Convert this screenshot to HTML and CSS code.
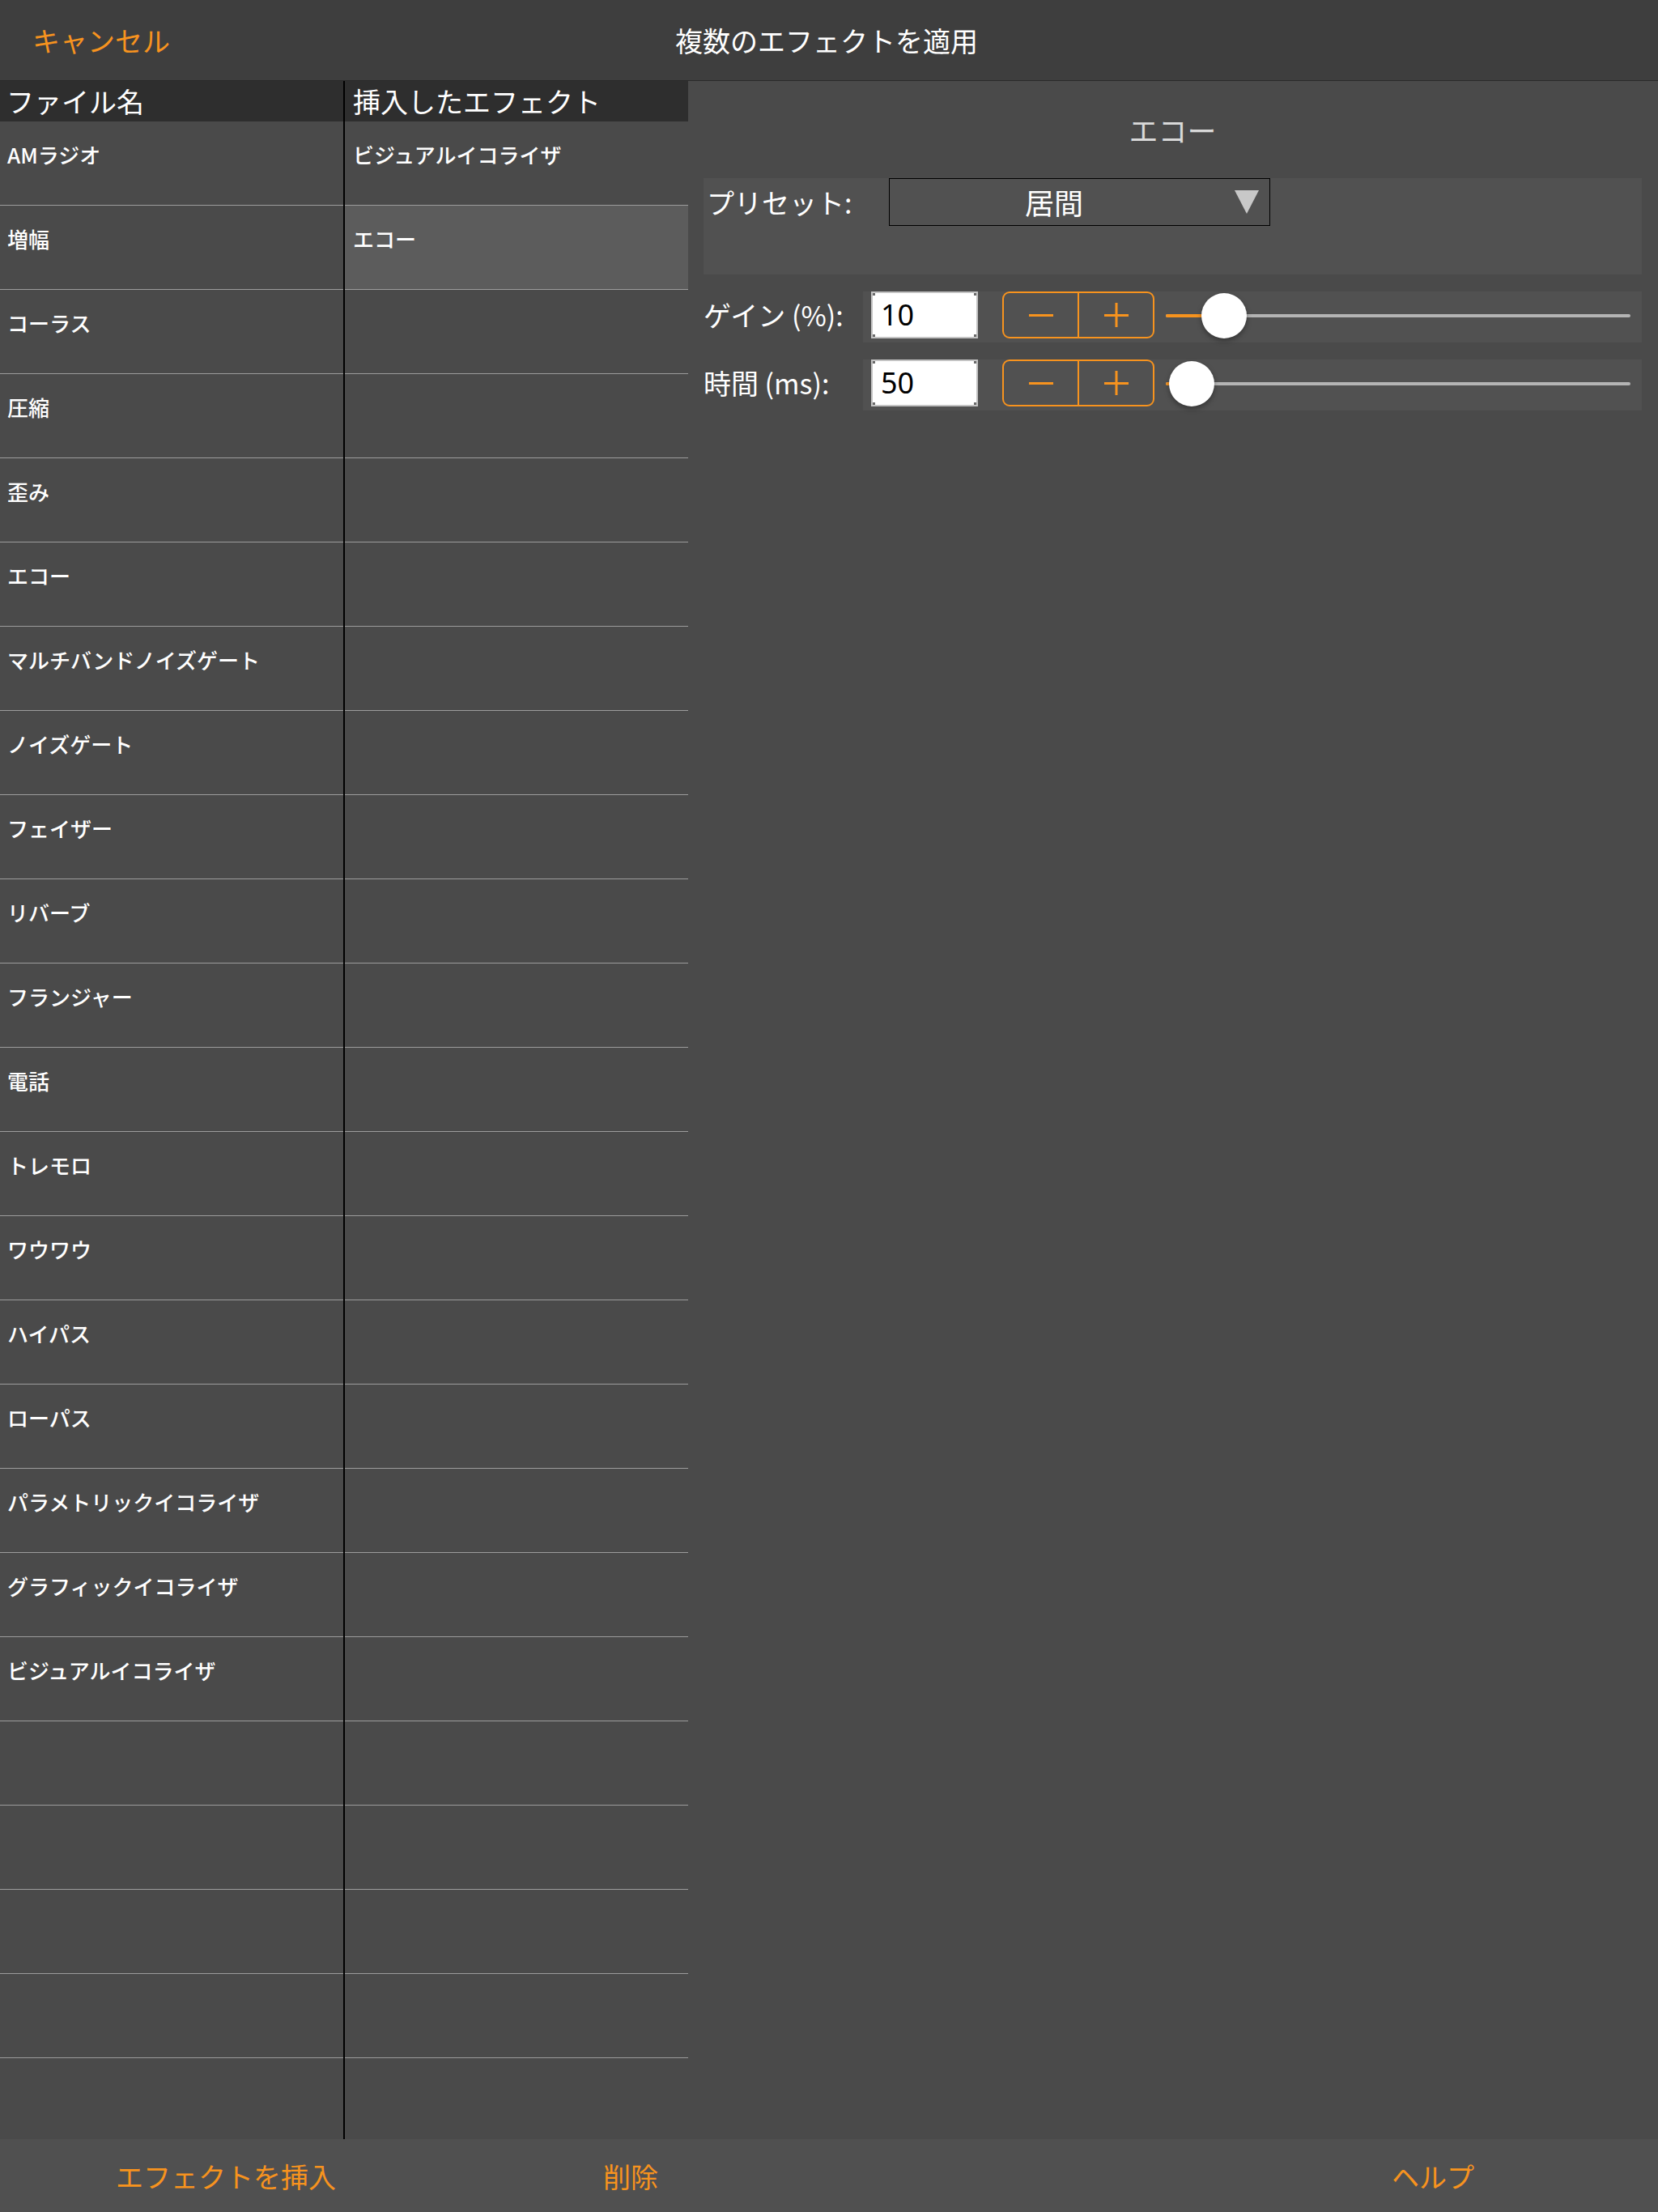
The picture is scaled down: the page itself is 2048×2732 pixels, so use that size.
FILE: index.html
```html
<!DOCTYPE html>
<html lang="ja">
<head>
<meta charset="utf-8">
<title>複数のエフェクトを適用</title>
<link rel="stylesheet" href="styles.css">
</head>
<body>
<div class="app">
  <header class="navbar">
    <span class="nav-left">キャンセル</span>
    <h1 class="nav-title">複数のエフェクトを適用</h1>
    <span class="nav-right"></span>
  </header>

  <div class="main">
    <section class="col col-files">
      <div class="col-head">ファイル名</div>
      <ul class="rows">
        <li>AMラジオ</li>
        <li>増幅</li>
        <li>コーラス</li>
        <li>圧縮</li>
        <li>歪み</li>
        <li>エコー</li>
        <li>マルチバンドノイズゲート</li>
        <li>ノイズゲート</li>
        <li>フェイザー</li>
        <li>リバーブ</li>
        <li>フランジャー</li>
        <li>電話</li>
        <li>トレモロ</li>
        <li>ワウワウ</li>
        <li>ハイパス</li>
        <li>ローパス</li>
        <li>パラメトリックイコライザ</li>
        <li>グラフィックイコライザ</li>
        <li>ビジュアルイコライザ</li>
        <li></li><li></li><li></li><li></li><li></li>
      </ul>
    </section>

    <section class="col col-inserted">
      <div class="col-head">挿入したエフェクト</div>
      <ul class="rows">
        <li>ビジュアルイコライザ</li>
        <li class="selected">エコー</li>
        <li></li><li></li><li></li><li></li><li></li><li></li><li></li><li></li>
        <li></li><li></li><li></li><li></li><li></li><li></li><li></li><li></li>
        <li></li><li></li><li></li><li></li><li></li><li></li>
      </ul>
    </section>

    <section class="panel">
      <h2 class="panel-title">エコー</h2>

      <div class="preset">
        <span class="preset-label">プリセット:</span>
        <div class="dropdown">
          <span class="dd-value">居間</span>
          <span class="dd-arrow"></span>
        </div>
      </div>

      <div class="param">
        <span class="param-label">ゲイン (%):</span>
        <div class="param-box">
          <div class="num">10</div>
          <div class="stepper">
            <span class="step step-minus">
              <svg width="32" height="32" viewBox="0 0 32 32"><path d="M1 16.5H31" stroke="#f7931e" stroke-width="3"/></svg>
            </span>
            <span class="step step-plus">
              <svg width="32" height="32" viewBox="0 0 32 32"><path d="M1 16.5H31M16 1V31" stroke="#f7931e" stroke-width="3"/></svg>
            </span>
          </div>
          <div class="slider">
            <div class="track"><div class="fill" style="width:50px"></div></div>
            <div class="knob" style="left:44px"></div>
          </div>
        </div>
      </div>

      <div class="param">
        <span class="param-label">時間 (ms):</span>
        <div class="param-box">
          <div class="num">50</div>
          <div class="stepper">
            <span class="step step-minus">
              <svg width="32" height="32" viewBox="0 0 32 32"><path d="M1 16.5H31" stroke="#f7931e" stroke-width="3"/></svg>
            </span>
            <span class="step step-plus">
              <svg width="32" height="32" viewBox="0 0 32 32"><path d="M1 16.5H31M16 1V31" stroke="#f7931e" stroke-width="3"/></svg>
            </span>
          </div>
          <div class="slider">
            <div class="track"><div class="fill" style="width:8px"></div></div>
            <div class="knob" style="left:4px"></div>
          </div>
        </div>
      </div>
    </section>
  </div>

  <footer class="toolbar">
    <span class="tb-insert">エフェクトを挿入</span>
    <span class="tb-delete">削除</span>
    <span class="tb-help">ヘルプ</span>
  </footer>
</div>
</body>
</html>
```

FILE: styles.css
```css
* { box-sizing: border-box; }

html, body {
  margin: 0;
  padding: 0;
  background: #4a4a4a;
}

body {
  font-family: "Noto Sans CJK JP", "Noto Sans", sans-serif;
  color: #ffffff;
  width: 2048px;
  height: 2732px;
  overflow: hidden;
}

.app {
  display: flex;
  flex-direction: column;
  height: 2732px;
}

/* ---------- navbar ---------- */
.navbar {
  height: 100px;
  flex: 0 0 100px;
  background: #3e3e3e;
  border-bottom: 1px solid #2a2a2a;
  display: grid;
  grid-template-columns: 1fr auto 1fr;
  align-items: center;
}

.nav-left {
  padding-left: 40px;
  font-size: 34px;
  color: #f7931e;
  line-height: 1;
}

.nav-title {
  margin: 0;
  font-size: 34px;
  font-weight: 400;
  line-height: 1;
  color: #ffffff;
  padding-right: 6px;
}

/* ---------- main ---------- */
.main {
  flex: 1;
  min-height: 0;
  display: flex;
  background: #4a4a4a;
}

.col {
  width: 424px;
  display: flex;
  flex-direction: column;
  overflow: hidden;
}

.col-files {
  width: 426px;
  border-right: 2px solid #000000;
}

.col-head {
  height: 50px;
  flex: 0 0 50px;
  background: #2e2e2e;
  font-size: 34px;
  line-height: 50px;
  padding-left: 8px;
  white-space: nowrap;
}

.col-inserted .col-head {
  padding-left: 10px;
}

.rows {
  list-style: none;
  margin: 0;
  padding: 0;
  flex: 1;
  overflow: hidden;
}

.rows li {
  height: 104px;
  border-bottom: 1px solid #9c9c9c;
  padding: 22px 0 0 9px;
  font-size: 26px;
  line-height: 38px;
  font-weight: 500;
  white-space: nowrap;
}

.col-inserted .rows li {
  padding-left: 10px;
}

.rows li.selected {
  background: #5c5c5c;
}

/* ---------- right panel ---------- */
.panel {
  flex: 1;
  padding: 0 20px 0 19px;
}

.panel-title {
  margin: 35px 0 0 0;
  font-size: 36px;
  font-weight: 400;
  line-height: 50px;
  text-align: center;
  color: #d9d9d9;
}

.preset {
  margin-top: 35px;
  height: 119px;
  background: #515151;
  display: flex;
  align-items: flex-start;
  padding-left: 4px;
}

.preset-label {
  width: 225px;
  font-size: 34px;
  line-height: 59px;
}

.dropdown {
  width: 471px;
  height: 59px;
  border: 1px solid #000000;
  display: flex;
  align-items: center;
  padding-right: 13px;
}

.dd-value {
  flex: 1;
  text-align: center;
  font-size: 36px;
  line-height: 1;
  margin-right: 20px;
  margin-top: -2px;
}

.dd-arrow {
  width: 0;
  height: 0;
  border-left: 15px solid transparent;
  border-right: 15px solid transparent;
  border-top: 29px solid #c8c8c8;
}

.param {
  margin-top: 21px;
  display: flex;
  align-items: flex-start;
}

.param-label {
  width: 197px;
  font-size: 34px;
  line-height: 58px;
  white-space: nowrap;
}

.param-box {
  flex: 1;
  height: 63px;
  background: #515151;
  display: flex;
  align-items: flex-start;
  padding: 0 14px 0 10px;
}

.num {
  width: 132px;
  height: 58px;
  background-color: #ffffff;
  border: 2px solid #c4c4c4;
  color: #000000;
  font-family: "Noto Sans", "Liberation Sans", sans-serif;
  font-size: 36px;
  line-height: 54px;
  padding-left: 10px;
  background-image:
    linear-gradient(#6a6a6a, #6a6a6a),
    linear-gradient(#6a6a6a, #6a6a6a),
    linear-gradient(#6a6a6a, #6a6a6a),
    linear-gradient(#6a6a6a, #6a6a6a);
  background-size: 3px 3px;
  background-repeat: no-repeat;
  background-position: top left, top right, bottom left, bottom right;
}

.stepper {
  margin-left: 30px;
  width: 188px;
  height: 58px;
  border: 2px solid #f7931e;
  border-radius: 9px;
  display: flex;
}

.step {
  flex: 1;
  display: flex;
  align-items: center;
  justify-content: center;
}

.step-minus {
  border-right: 2px solid #f7931e;
}

.step svg {
  display: block;
}

.slider {
  margin-left: 14px;
  flex: 1;
  height: 58px;
  position: relative;
}

.track {
  position: absolute;
  left: 0;
  right: 0;
  top: 28px;
  height: 4px;
  border-radius: 2px;
  background: #b4b4b4;
}

.fill {
  height: 4px;
  border-radius: 2px;
  background: #f7931e;
}

.knob {
  position: absolute;
  top: 2px;
  width: 56px;
  height: 56px;
  border-radius: 50%;
  background: #ffffff;
  box-shadow: 0 3px 6px rgba(0, 0, 0, 0.35);
}

/* ---------- toolbar ---------- */
.toolbar {
  height: 90px;
  flex: 0 0 90px;
  background: #505050;
  display: flex;
  align-items: center;
  font-size: 34px;
  color: #f7931e;
  padding: 0 227px 0 143px;
  white-space: nowrap;
}

.tb-delete {
  margin-left: 330px;
}

.tb-help {
  margin-left: auto;
}
```
